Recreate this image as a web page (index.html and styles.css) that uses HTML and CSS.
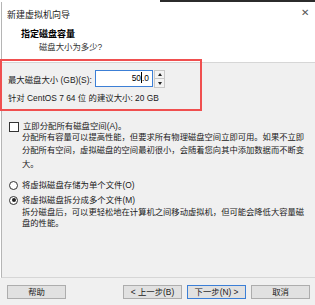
FILE: index.html
```html
<!DOCTYPE html>
<html lang="zh-CN">
<head>
    <meta charset="UTF-8">
    <title>新建虚拟机向导</title>
    <link rel="stylesheet" href="styles.css">
</head>
<body>
    <div class="window">
        <div class="top-line"></div>
        <div class="titlebar">
            <span class="title">新建虚拟机向导</span>
            <span class="close">&#x2715;</span>
        </div>
        <div class="header">
            <div class="header-title">指定磁盘容量</div>
            <div class="header-sub">磁盘大小为多少?</div>
        </div>
        <div class="content">
            <div class="size-row">
                <label for="size">最大磁盘大小 (GB)(S):</label>
                <div class="spin">
                    <div class="spin-input">50<span class="caret"></span>.0</div>
                    <div class="spin-buttons">
                        <div class="spin-btn"><span class="arrow up"></span></div>
                        <div class="spin-btn"><span class="arrow down"></span></div>
                    </div>
                </div>
            </div>
            <div class="hint">针对 CentOS 7 64 位 的建议大小: 20 GB</div>

            <div class="option first">
                <span class="checkbox"></span>
                <span>立即分配所有磁盘空间(A)。</span>
            </div>
            <p class="desc">分配所有容量可以提高性能，但要求所有物理磁盘空间立即可用。如果不立即分配所有空间，虚拟磁盘的空间最初很小，会随着您向其中添加数据而不断变大。</p>

            <div class="option radios">
                <span class="radio"></span>
                <span>将虚拟磁盘存储为单个文件(O)</span>
            </div>
            <div class="option">
                <span class="radio checked"></span>
                <span>将虚拟磁盘拆分成多个文件(M)</span>
            </div>
            <p class="desc tight">拆分磁盘后，可以更轻松地在计算机之间移动虚拟机，但可能会降低大容量磁盘的性能。</p>
        </div>
        <div class="footer">
            <button class="btn">帮助</button>
            <div class="spacer"></div>
            <button class="btn">&lt; 上一步(B)</button>
            <button class="btn default">下一步(N) &gt;</button>
            <button class="btn">取消</button>
        </div>
        <div class="highlight"></div>
    </div>
</body>
</html>
```

FILE: styles.css
```css
body {
    margin: 0;
    background-color: #ffffff;
    font-family: "Liberation Sans", "Noto Sans CJK SC", sans-serif;
    font-size: 8.4px;
    color: #1a1a1a;
}
.window {
    position: relative;
    width: 315px;
    height: 305px;
    overflow: hidden;
    display: flex;
    flex-direction: column;
}
.top-line {
    flex: none;
    height: 2px;
    margin-left: 160px;
    background-color: #2b2b2b;
}
.titlebar {
    flex: none;
    height: 24px;
    display: flex;
    align-items: center;
    justify-content: space-between;
    padding: 0 6px 0 7px;
    border-left: 1px solid #b5b5b5;
    margin-left: 1px;
}
.title {
    font-size: 9px;
    color: #222;
    margin-left: -2px;
}
.close {
    font-size: 10px;
    color: #555;
    margin-top: -3px;
}
.header {
    flex: none;
    height: 36px;
    padding-left: 19px;
    border-left: 1px solid #b5b5b5;
    border-bottom: 1px solid #d6d6d6;
    margin-left: 1px;
}
.header-title {
    font-size: 9px;
    font-weight: bold;
    color: #000;
    line-height: 14px;
    margin-top: 1px;
}
.header-sub {
    font-size: 8.4px;
    color: #333;
    line-height: 13px;
    padding-left: 18px;
}
.content {
    flex: 1;
    background-color: #f0f0f0;
    border-left: 1px solid #b5b5b5;
    border-bottom: 1px solid #d6d6d6;
    margin-left: 1px;
    padding: 7px 0 0 6px;
}
.size-row {
    display: flex;
    align-items: center;
    height: 18px;
}
.size-row label {
    width: 87px;
}
.spin {
    display: flex;
}
.spin-input {
    width: 53px;
    height: 15px;
    border: 1px solid #3c7fd6;
    background-color: #fff;
    text-align: right;
    line-height: 15px;
    padding-right: 3px;
    color: #000;
}
.caret {
    display: inline-block;
    width: 1px;
    height: 11px;
    background-color: #000;
    vertical-align: middle;
    margin-top: -2px;
}
.spin-buttons {
    display: flex;
    flex-direction: column;
    margin-left: 1px;
}
.spin-btn {
    width: 9px;
    height: 7px;
    border: 1px solid #c8c8c8;
    background-color: #f3f3f3;
    display: flex;
    align-items: center;
    justify-content: center;
}
.spin-btn + .spin-btn {
    border-top: none;
    height: 8px;
}
.arrow {
    width: 0;
    height: 0;
    border-left: 2px solid transparent;
    border-right: 2px solid transparent;
}
.arrow.up {
    border-bottom: 3px solid #222;
}
.arrow.down {
    border-top: 3px solid #222;
}
.hint {
    margin-top: 3px;
    height: 14px;
    line-height: 14px;
}
.option {
    display: flex;
    align-items: center;
    gap: 4px;
    height: 13px;
    line-height: 13px;
}
.option.first {
    margin-top: 15px;
}
.option.radios {
    margin-top: 8px;
    margin-bottom: 2px;
}
.checkbox {
    width: 8px;
    height: 8px;
    border: 1px solid #333;
    background-color: #fff;
    margin-left: 1px;
}
.radio {
    box-sizing: border-box;
    width: 9px;
    height: 9px;
    border: 1px solid #333;
    border-radius: 50%;
    background-color: #fff;
    margin-left: 1px;
    position: relative;
}
.radio.checked::after {
    content: "";
    position: absolute;
    left: 1.5px;
    top: 1.5px;
    width: 4px;
    height: 4px;
    border-radius: 50%;
    background-color: #222;
}
.desc {
    width: 284px;
    margin: -2px 0 0 14px;
    font-size: 8.3px;
    line-height: 13.3px;
    text-spacing-trim: space-all;
    color: #1a1a1a;
}
.desc.tight {
    margin-top: 0;
    line-height: 11px;
}
.footer {
    flex: none;
    height: 27px;
    background-color: #f0f0f0;
    display: flex;
    align-items: center;
    padding: 0 5px 0 7px;
    gap: 5px;
}
.spacer {
    flex: 1;
}
.btn {
    width: 59px;
    height: 14px;
    padding: 0;
    border: 1px solid #adadad;
    background-color: #e1e1e1;
    font-family: inherit;
    font-size: 8.4px;
    color: #1a1a1a;
    line-height: 12px;
}
.btn.default {
    border-color: #3c7fd6;
}
.highlight {
    position: absolute;
    left: 0;
    top: 59px;
    width: 198px;
    height: 48px;
    border: 2px solid #f04f4f;
}
```
